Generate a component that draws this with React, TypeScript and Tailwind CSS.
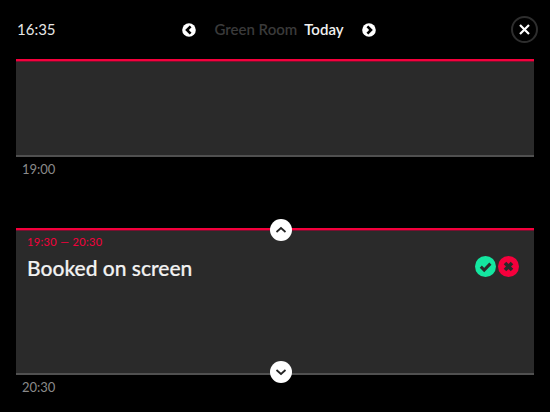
const FONT = "font-['Lato','Noto_Sans',sans-serif]";

function ChevronCircle({ dir }: { dir: "left" | "right" }) {
  return (
    <svg width="14" height="14" viewBox="0 0 14 14" className="shrink-0">
      <circle cx="7" cy="7" r="6.8" fill="#fff" />
      <path
        d={dir === "left" ? "M8.6 3.4 5 7l3.6 3.6" : "M5.4 3.4 9 7l-3.6 3.6"}
        fill="none"
        stroke="#000"
        strokeWidth="2.6"
      />
    </svg>
  );
}

function RoundBtn({ up, className }: { up: boolean; className: string }) {
  return (
    <div className={`absolute left-1/2 -ml-[5px] w-[22px] h-[22px] rounded-full bg-white flex items-center justify-center ${className}`}>
      <svg width="12" height="8" viewBox="0 0 12 8">
        <path
          d={up ? "M1.5 6 6 2l4.5 4" : "M1.5 2 6 6l4.5-4"}
          fill="none"
          stroke="#222"
          strokeWidth="1.7"
        />
      </svg>
    </div>
  );
}

export default function App() {
  return (
    <div className={`w-[550px] h-[412px] bg-black overflow-hidden px-4 ${FONT}`}>
      <header className="h-[59px] flex items-center justify-between">
        <span className="text-[15px] text-[#e6e6e6] w-[36px] pl-[1px]">16:35</span>
        <div className="flex items-center -ml-[5px] gap-[18px]">
          <ChevronCircle dir="left" />
          <div className="flex items-center gap-[7px] text-[15px] font-semibold">
            <span className="text-[#3a3a3a]">Green Room</span>
            <span className="text-[#f0f0f0]">Today</span>
          </div>
          <ChevronCircle dir="right" />
        </div>
        <div className="-mr-[4px] w-[27px] h-[27px] rounded-full border-2 border-[#2e2e2e] flex items-center justify-center">
          <svg width="11" height="11" viewBox="0 0 11 11">
            <path d="M1 1l9 9M10 1l-9 9" stroke="#fff" strokeWidth="2.2" />
          </svg>
        </div>
      </header>

      <section className="h-[98px] bg-[#2a2a2a] border-t-2 border-t-[#f5003c] shadow-[inset_0_1px_0_#7a1030] border-b-2 border-b-[#505050]" />
      <div className="pl-[6px] pt-[3px] h-[71px] text-[13px] text-[#8a8a8a] leading-[18px]">19:00</div>

      <section className="relative h-[147px] bg-[#2a2a2a] border-t-2 border-t-[#f5003c] shadow-[inset_0_1px_0_#7a1030] border-b-2 border-b-[#505050] pl-[11px] flex flex-col">
        <RoundBtn up className="-top-[11px]" />
        <div className="pt-[5px] text-[11px] leading-[14px] font-normal text-[#f5003c] tracking-[0.35px]">19:30 — 20:30</div>
        <div className="mt-[5px] pr-[15px] flex items-start justify-between">
          <span className="text-[21px] leading-[28px] font-medium text-[#f2f2f2] [-webkit-text-stroke:0.2px_#f2f2f2]">Booked on screen</span>
          <div className="flex gap-[2px] mt-[2px]">
            <svg width="21" height="21" viewBox="0 0 21 21">
              <circle cx="10.5" cy="10.5" r="10.5" fill="#14e6a0" />
              <path d="M5.8 10.6l3.4 3.4 6.2-6.4" fill="none" stroke="#2a2a2a" strokeWidth="3" />
            </svg>
            <svg width="21" height="21" viewBox="0 0 21 21">
              <circle cx="10.5" cy="10.5" r="10.5" fill="#f5003c" />
              <path d="M7 7l7 7M14 7l-7 7" fill="none" stroke="#2a2a2a" strokeWidth="3.6" />
            </svg>
          </div>
        </div>
        <RoundBtn up={false} className="-bottom-[10px]" />
      </section>
      <div className="pl-[6px] pt-[3px] text-[13px] text-[#8a8a8a] leading-[18px]">20:30</div>
    </div>
  );
}
